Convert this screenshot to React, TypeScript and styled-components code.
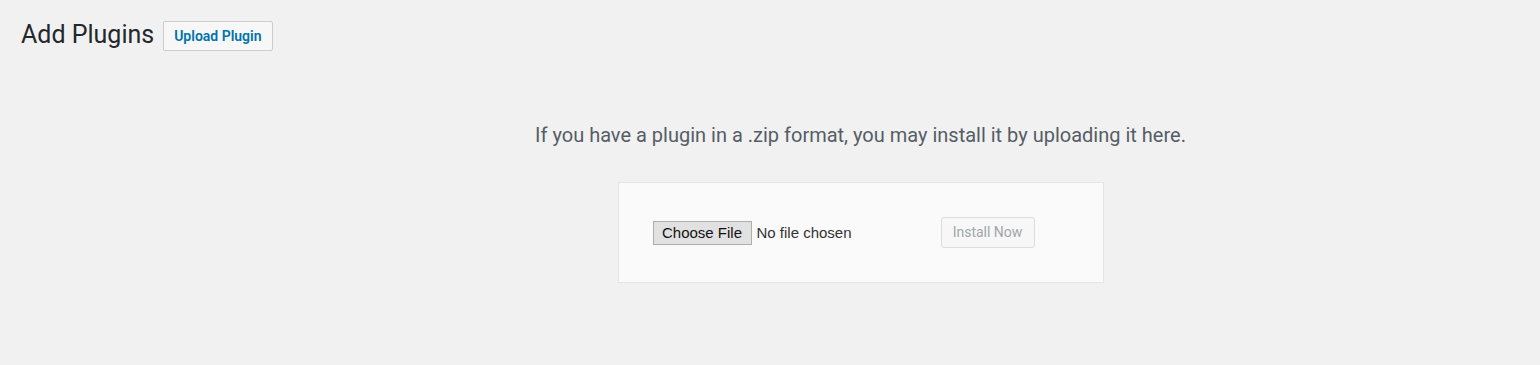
import styled, { createGlobalStyle } from "styled-components";

const GlobalStyle = createGlobalStyle`
  html, body {
    margin: 0;
    padding: 0;
    background: #f1f1f1;
  }
  body {
    font-family: Roboto, "Noto Sans", sans-serif;
    color: #444;
  }
`;

const Wrap = styled.div`
  padding: 0 20px 0 21px;
  min-height: 365px;
  box-sizing: border-box;
`;

const Header = styled.header`
  display: flex;
  align-items: flex-start;
  height: 72px;
  padding-top: 18px;
  box-sizing: border-box;
`;

const Title = styled.h1`
  margin: 0;
  font-family: Roboto, sans-serif;
  font-weight: 400;
  font-size: 25px;
  line-height: 34px;
  color: #23282d;
`;

const TitleAction = styled.a`
  margin-left: 9px;
  margin-top: 3px;
  height: 30px;
  box-sizing: border-box;
  padding: 0 10px;
  display: inline-flex;
  align-items: center;
  border: 1px solid #ccc;
  border-radius: 2px;
  background: #f7f7f7;
  color: #0073aa;
  font-family: Roboto, sans-serif;
  font-weight: 600;
  font-size: 14px;
  text-decoration: none;
`;

const UploadSection = styled.section`
  padding-left: 180px;
  display: flex;
  flex-direction: column;
  align-items: center;
`;

const Help = styled.p`
  margin: 50px 0 0;
  font-family: Roboto, sans-serif;
  font-size: 20px;
  line-height: 27px;
  color: #555d66;
  text-align: center;
`;

const UploadForm = styled.form`
  margin-top: 33px;
  width: 486px;
  height: 101px;
  box-sizing: border-box;
  background: #fafafa;
  border: 1px solid #e5e5e5;
  display: flex;
  align-items: center;
  padding: 0 34px;
`;

const FilePicker = styled.div`
  width: 288px;
  display: flex;
  align-items: center;
  gap: 5px;
  font-family: "Liberation Sans", Arial, sans-serif;
  font-size: 15px;
  color: #333;
`;

const ChooseButton = styled.button`
  width: 99px;
  height: 24px;
  padding: 0;
  box-sizing: border-box;
  border: 1px solid #adadad;
  border-radius: 0;
  background: #e1e1e1;
  font-family: "Liberation Sans", Arial, sans-serif;
  font-size: 15px;
  color: #111;
`;

const InstallButton = styled.button`
  width: 94px;
  height: 31px;
  margin-top: -1px;
  box-sizing: border-box;
  border: 1px solid #ddd;
  border-radius: 3px;
  background: #f7f7f7;
  color: #a0a5aa;
  font-family: Roboto, sans-serif;
  font-size: 14px;
  padding: 0;
`;

export default function App() {
  return (
    <>
      <GlobalStyle />
      <Wrap>
        <Header>
          <Title>Add Plugins</Title>
          <TitleAction href="#">Upload Plugin</TitleAction>
        </Header>
        <UploadSection>
          <Help>
            If you have a plugin in a .zip format, you may install it by
            uploading it here.
          </Help>
          <UploadForm>
            <FilePicker>
              <ChooseButton type="button">Choose File</ChooseButton>
              <span>No file chosen</span>
            </FilePicker>
            <InstallButton type="submit" disabled>
              Install Now
            </InstallButton>
          </UploadForm>
        </UploadSection>
      </Wrap>
    </>
  );
}
